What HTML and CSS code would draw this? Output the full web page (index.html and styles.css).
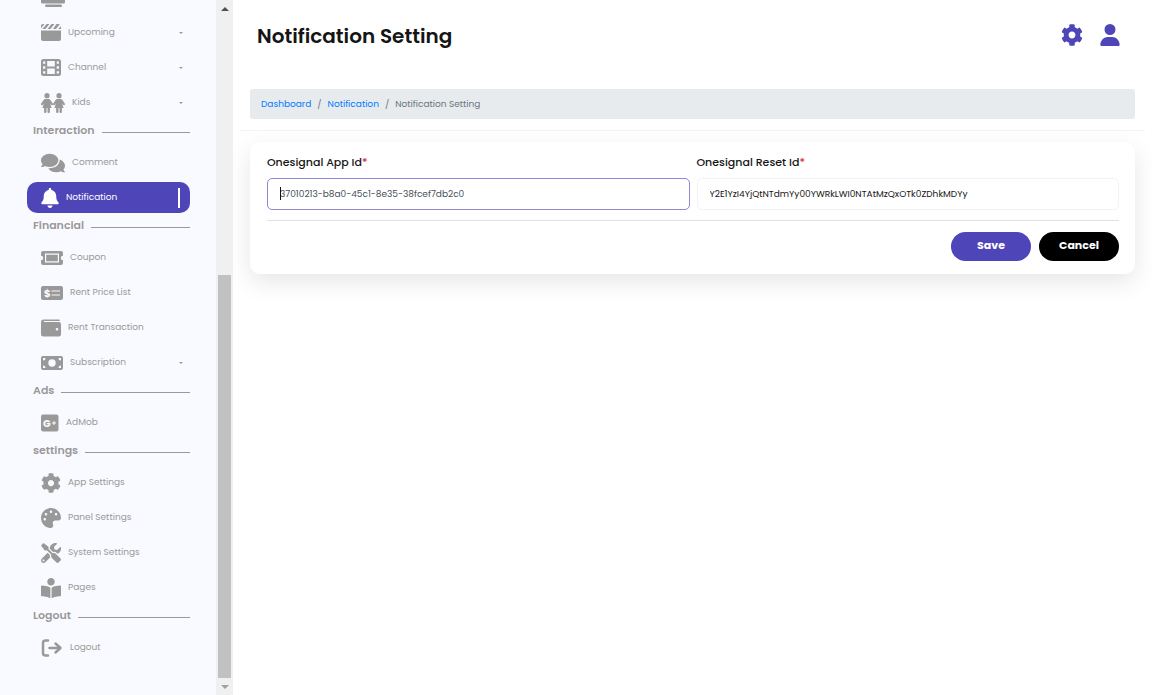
FILE: index.html
```html
<!DOCTYPE html>
<html lang="en">
<head>
  <meta charset="UTF-8" />
  <meta name="viewport" content="width=device-width, initial-scale=1" />
  <title>Notification Setting</title>
  <link rel="stylesheet" href="styles.css">
</head>
<body>
  <svg class="defs" aria-hidden="true">
    <symbol id="cog" viewBox="0 0 512 512"><path d="M487.4 315.7l-42.6-24.6c4.3-23.2 4.3-47 0-70.2l42.6-24.6c4.9-2.8 7.1-8.6 5.5-14-11.1-35.6-30-67.8-54.7-94.6-3.8-4.1-10-5.1-14.8-2.3L380.8 110c-17.9-15.4-38.5-27.3-60.8-35.1V25.8c0-5.6-3.9-10.5-9.4-11.7-36.7-8.2-74.3-7.8-109.2 0-5.5 1.2-9.4 6.1-9.4 11.7V75c-22.2 7.9-42.8 19.8-60.8 35.1L88.7 85.5c-4.9-2.8-11-1.9-14.8 2.3-24.7 26.7-43.6 58.9-54.7 94.6-1.7 5.4.6 11.2 5.5 14L67.3 221c-4.3 23.2-4.3 47 0 70.2l-42.6 24.6c-4.9 2.8-7.1 8.6-5.5 14 11.1 35.6 30 67.8 54.7 94.6 3.8 4.1 10 5.1 14.8 2.3l42.6-24.6c17.9 15.4 38.5 27.3 60.8 35.1v49.2c0 5.6 3.9 10.5 9.4 11.7 36.7 8.2 74.3 7.8 109.2 0 5.5-1.2 9.4-6.1 9.4-11.7v-49.2c22.2-7.9 42.8-19.8 60.8-35.1l42.6 24.6c4.9 2.8 11 1.9 14.8-2.3 24.7-26.7 43.6-58.9 54.7-94.6 1.5-5.5-.7-11.3-5.6-14.1zM256 336c-44.1 0-80-35.9-80-80s35.9-80 80-80 80 35.9 80 80-35.9 80-80 80z"/></symbol>
    <symbol id="kid" viewBox="0 0 12 20"><circle cx="6" cy="2.7" r="2.6"/><path d="M4.400 6h3.200c.8 0 1.400.4 1.800 1l2.400 3.600c.7 1.200-1 2.300-1.800 1.200L9 10.300l1.600 4.700H8.900v3.800c0 1.600-2.400 1.600-2.400 0V15h-1v3.800c0 1.600-2.400 1.600-2.400 0V15H1.400L3 10.300l-1 1.500c-.8 1.100-2.500 0-1.800-1.200L2.600 7c.4-.6 1-1 1.800-1z"/></symbol>
  </svg>

  <div class="wrapper">
    <aside class="sidebar">
      <nav class="menu">
        <a href="#" class="item" aria-label="TV Show">
          <svg width="24" height="20" viewBox="0 0 24 20"><path d="M2 0h20a2 2 0 0 1 2 2v11a2 2 0 0 1-2 2H2a2 2 0 0 1-2-2V2a2 2 0 0 1 2-2zm1 2v10h18V2z"/><rect y="12" width="24" height="3.500" rx="1.500"/><rect x="4" y="16.500" width="17" height="2.500" rx="1.200"/></svg>
          <i class="caret"></i>
        </a>
        <a href="#" class="item">
          <svg width="20" height="20" viewBox="0 0 20 20"><path d="M0 7.500h20V16a2 2 0 0 1-2 2H2a2 2 0 0 1-2-2z"/><path d="M2 1h1.500L0 5.500V3a2 2 0 0 1 2-2zM5.500 1h3L4.500 6h-3zM10.500 1h3l-4 5h-3zM15.500 1H18l.8.200L15 6h-3zM20 3v3h-2.900z"/></svg>
          <span>Upcoming</span><i class="caret"></i>
        </a>
        <a href="#" class="item">
          <svg width="20" height="20" viewBox="0 0 20 20"><path fill-rule="evenodd" d="M2.500 1h15A2.500 2.500 0 0 1 20 3.500v12a2.500 2.500 0 0 1-2.500 2.500h-15A2.500 2.500 0 0 1 0 15.500v-12A2.500 2.500 0 0 1 2.500 1zM2 3.500v2.300h2.300V3.500zm0 4.800v2.400h2.300V8.300zm0 4.900v2.300h2.300v-2.300zM15.700 3.500v2.300H18V3.500zm0 4.800v2.400H18V8.300zm0 4.900v2.300H18v-2.300zM6.200 3v5.500h7.600V3zm0 7.500V16h7.600v-5.500z"/></svg>
          <span>Channel</span><i class="caret"></i>
        </a>
        <a href="#" class="item">
          <svg width="24" height="20" viewBox="0 0 24 20"><use href="#kid" width="12" height="20"/><use href="#kid" x="12" width="12" height="20"/></svg>
          <span>Kids</span><i class="caret"></i>
        </a>

        <h2 class="heading">Interaction</h2>
        <a href="#" class="item">
          <svg width="24" height="22" viewBox="0 0 576 512"><path d="M416 192c0-88.400-93.100-160-208-160S0 103.600 0 192c0 34.300 14.100 65.900 38 92-13.400 30.200-35.500 54.200-35.800 54.500-2.200 2.300-2.800 5.700-1.500 8.700S4.800 352 8 352c36.600 0 66.900-12.300 88.700-25 32.200 15.700 70.300 25 111.300 25 114.900 0 208-71.600 208-160zm122 220c23.900-26 38-57.700 38-92 0-66.900-53.500-124.200-129.300-148.100.9 6.600 1.300 13.300 1.300 20.100 0 105.900-107.700 192-240 192-10.800 0-21.300-.8-31.700-1.900C207.800 439.600 281.800 480 368 480c41 0 79.100-9.200 111.300-25 21.800 12.700 52.100 25 88.700 25 3.200 0 6.100-1.900 7.300-4.800 1.300-2.900.7-6.300-1.500-8.700-.3-.3-22.400-24.200-35.800-54.500z"/></svg>
          <span>Comment</span>
        </a>
        <a href="#" class="item active">
          <svg width="18" height="20" viewBox="0 0 448 512"><path d="M224 512c35.320 0 63.970-28.650 63.970-64H160.030c0 35.350 28.650 64 63.970 64zm215.390-149.710c-19.320-20.760-55.470-51.990-55.470-154.290 0-77.700-54.480-139.900-127.940-155.160V32c0-17.670-14.320-32-31.980-32s-31.980 14.330-31.980 32v20.840C118.560 68.100 64.080 130.300 64.080 208c0 102.300-36.150 133.530-55.470 154.290-6 6.450-8.660 14.160-8.610 21.710.11 16.400 12.980 32 32.100 32h383.800c19.120 0 32-15.600 32.100-32 .05-7.550-2.610-15.270-8.610-21.710z"/></svg>
          <span>Notification</span>
        </a>

        <h2 class="heading">Financial</h2>
        <a href="#" class="item">
          <svg width="22" height="20" viewBox="0 0 22 20"><path fill-rule="evenodd" d="M2 3h18a2 2 0 0 1 2 2v2.800a2.200 2.200 0 0 0 0 4.400V15a2 2 0 0 1-2 2H2a2 2 0 0 1-2-2v-2.800a2.200 2.200 0 0 0 0-4.400V5a2 2 0 0 1 2-2zm2 2.500v9h14v-9zM5.200 6.700h11.600v6.600H5.200z"/></svg>
          <span>Coupon</span>
        </a>
        <a href="#" class="item">
          <svg width="22" height="20" viewBox="0 0 22 20"><rect y="3" width="22" height="14" rx="2"/><path class="cut" d="M10.500 7.500h8.500v1h-8.500zM10.500 11.500h8.500v1h-8.500z"/><text class="glyph" x="3" y="13.500">$</text></svg>
          <span>Rent Price List</span>
        </a>
        <a href="#" class="item">
          <svg width="20" height="20" viewBox="0 0 20 20"><path fill-rule="evenodd" d="M2.500 1.500h15.300a1 1 0 0 1 1 1v.4H3.200a.6.600 0 0 0 0 1.200h14.600A2.200 2.200 0 0 1 20 6.300v10a2.200 2.200 0 0 1-2.200 2.200H2.500A2.500 2.500 0 0 1 0 16V4a2.500 2.500 0 0 1 2.500-2.500zM16 10a1.300 1.300 0 1 0 0 2.600 1.300 1.300 0 0 0 0-2.600z"/></svg>
          <span>Rent Transaction</span>
        </a>
        <a href="#" class="item">
          <svg width="22" height="20" viewBox="0 0 22 20"><rect y="3" width="22" height="14" rx="2"/><g class="cut"><circle cx="11" cy="10" r="3.700"/><path d="M2 7.500V5h2.500A2.500 2.500 0 0 1 2 7.500zM20 7.500V5h-2.500A2.500 2.500 0 0 0 20 7.500zM2 12.500V15h2.500A2.500 2.500 0 0 0 2 12.500zM20 12.500V15h-2.500a2.500 2.500 0 0 1 2.500-2.500z"/></g></svg>
          <span>Subscription</span><i class="caret"></i>
        </a>

        <h2 class="heading">Ads</h2>
        <a href="#" class="item">
          <svg width="18" height="20" viewBox="0 0 18 20"><rect y="1.500" width="17.500" height="17" rx="2"/><text class="glyph" x="2" y="13.500">G</text><path class="cut" d="M11 9.500h1.500V8h1v1.500H15v1h-1.500V12h-1v-1.500H11z"/></svg>
          <span>AdMob</span>
        </a>

        <h2 class="heading">settings</h2>
        <a href="#" class="item">
          <svg width="20" height="20"><use href="#cog" width="20" height="20"/></svg>
          <span>App Settings</span>
        </a>
        <a href="#" class="item">
          <svg width="20" height="20" viewBox="0 0 512 512"><path d="M204.300 5C104.900 24.400 24.800 104.300 5.200 203.400c-37 187 131.700 326.400 258.800 306.700 41.200-6.400 61.400-54.600 42.500-91.700-23.100-45.400 9.900-98.400 60.900-98.400h79.700c35.800 0 64.800-29.600 64.900-65.300C511.500 97.100 368.100-26.900 204.300 5zM96 320c-17.700 0-32-14.300-32-32s14.300-32 32-32 32 14.300 32 32-14.300 32-32 32zm32-128c-17.700 0-32-14.300-32-32s14.300-32 32-32 32 14.300 32 32-14.300 32-32 32zm128-64c-17.700 0-32-14.300-32-32s14.300-32 32-32 32 14.300 32 32-14.300 32-32 32zm128 64c-17.700 0-32-14.300-32-32s14.300-32 32-32 32 14.300 32 32-14.300 32-32 32z"/></svg>
          <span>Panel Settings</span>
        </a>
        <a href="#" class="item">
          <svg width="20" height="20" viewBox="0 0 512 512"><path d="M501.100 395.700L384 278.600c-23.100-23.100-57.600-27.600-85.400-13.900L192 158.100V96L64 0 0 64l96 128h62.100l106.600 106.600c-13.600 27.800-9.200 62.300 13.900 85.400l117.100 117.100c14.600 14.600 38.200 14.600 52.700 0l52.700-52.700c14.500-14.600 14.500-38.200 0-52.700zM331.700 225c28.300 0 54.900 11 74.900 31l19.400 19.400c15.800-6.900 30.800-16.500 43.800-29.500 37.100-37.100 49.700-89.300 37.900-136.700-2.200-9-13.500-12.100-20.100-5.500l-74.400 74.400-67.900-11.300L334 98.900l74.400-74.400c6.600-6.600 3.400-17.900-5.700-20.200-47.400-11.700-99.600.9-136.600 37.900-28.500 28.500-41.900 66.100-41.200 103.600l82.100 82.100c8.100-1.900 16.500-2.900 24.700-2.900zm-103.900 82l-56.700-56.700L18.700 402.800c-25 25-25 65.500 0 90.500s65.500 25 90.500 0l123.600-123.600c-7.600-19.900-9.900-41.600-5-62.700zM64 472c-13.200 0-24-10.800-24-24 0-13.300 10.700-24 24-24s24 10.700 24 24c0 13.200-10.700 24-24 24z"/></svg>
          <span>System Settings</span>
        </a>
        <a href="#" class="item">
          <svg width="20" height="20" viewBox="0 0 512 512"><path d="M352 96c0-53.020-42.980-96-96-96s-96 42.980-96 96 42.980 96 96 96 96-42.980 96-96zM233.590 241.100c-59.330-36.320-155.430-46.300-203.790-49.050C13.550 191.130 0 203.510 0 219.140v222.800c0 14.330 11.590 26.280 26.490 27.050 43.660 2.290 131.990 10.680 193.040 41.430 9.370 4.720 20.480-1.710 20.480-11.870V252.560c-.01-4.670-2.320-8.950-6.420-11.460zm248.610-49.050c-48.350 2.740-144.460 12.730-203.780 49.050-4.100 2.510-6.410 6.960-6.410 11.630v245.790c0 10.190 11.140 16.630 20.540 11.900 61.040-30.720 149.320-39.110 192.970-41.400 14.900-.78 26.490-12.730 26.490-27.060V219.140c-.01-15.630-13.560-28.010-29.810-27.090z"/></svg>
          <span>Pages</span>
        </a>

        <h2 class="heading">Logout</h2>
        <a href="#" class="item">
          <svg width="22" height="20" viewBox="0 0 22 20"><path class="stroke" d="M7 2.500H4.500a2.500 2.500 0 0 0-2.500 2.500v10a2.500 2.500 0 0 0 2.500 2.500H7M8.500 10H19M14.500 5.500L19.500 10l-5 4.500"/></svg>
          <span>Logout</span>
        </a>
      </nav>
    </aside>

    <div class="scrollbar" aria-hidden="true">
      <span class="arrow up"></span>
      <span class="track"></span>
      <span class="thumb"></span>
      <span class="arrow down"></span>
    </div>

    <main class="content">
      <header class="topbar">
        <h1>Notification Setting</h1>
        <div class="actions">
          <a href="#" aria-label="Settings"><svg width="22" height="22"><use href="#cog" width="22" height="22"/></svg></a>
          <a href="#" aria-label="Profile"><svg width="20" height="22" viewBox="0 0 448 512"><path d="M224 256A128 128 0 1 0 224 0a128 128 0 1 0 0 256zm-45.700 48C79.800 304 0 383.800 0 482.300C0 498.700 13.300 512 29.700 512H418.300c16.400 0 29.700-13.300 29.700-29.700C448 383.800 368.200 304 269.700 304H178.300z"/></svg></a>
        </div>
      </header>

      <div class="breadcrumb-row">
        <nav class="breadcrumb" aria-label="breadcrumb">
          <a href="#">Dashboard</a>
          <span>/</span>
          <a href="#">Notification</a>
          <span>/</span>
          <span>Notification Setting</span>
        </nav>
      </div>

      <form class="card">
        <div class="fields">
          <div class="field">
            <label for="app-id">Onesignal App Id<span class="required">*</span></label>
            <div class="input-wrap">
              <input type="text" id="app-id" class="focused" value="37010213-b8a0-45c1-8e35-38fcef7db2c0">
              <span class="cursor"></span>
            </div>
          </div>
          <div class="field">
            <label for="reset-id">Onesignal Reset Id<span class="required">*</span></label>
            <div class="input-wrap">
              <input type="text" id="reset-id" value="Y2E1YzI4YjQtNTdmYy00YWRkLWI0NTAtMzQxOTk0ZDhkMDYy">
            </div>
          </div>
        </div>
        <div class="buttons">
          <button type="button" class="save">Save</button>
          <button type="button" class="cancel">Cancel</button>
        </div>
      </form>
    </main>
  </div>
</body>
</html>
```
FILE: styles.css
```css
* {
  box-sizing: border-box;
}
body {
  margin: 0;
  background-color: #fff;
  color: #151515;
  font-family: Poppins, Inter, sans-serif;
  font-size: 9px;
}
a {
  text-decoration: none;
}
svg {
  display: block;
  flex: none;
  fill: currentColor;
}
.defs {
  position: absolute;
  width: 0;
  height: 0;
}
.wrapper {
  display: flex;
  height: 100vh;
}

/* sidebar */
.sidebar {
  flex: none;
  width: 216px;
  padding: 0 26px 0 27px;
  background-color: #f9faff;
  color: #999;
  overflow: hidden;
}
/* menu is scrolled down to its last entries */
.menu {
  margin-top: -18px;
}
.item {
  display: flex;
  align-items: center;
  gap: 7px;
  height: 31px;
  margin-bottom: 4px;
  padding: 0 7px 0 14px;
  border-radius: 10px;
  color: #999;
}
.item.active {
  background-color: #4e45b8;
  color: #fff;
}
.item.active::after {
  content: "";
  width: 2px;
  height: 20px;
  margin-left: auto;
  margin-right: 3px;
  background-color: #fff;
}
.caret {
  margin-left: auto;
  border-top: 2px solid #999;
  border-left: 2px solid transparent;
  border-right: 2px solid transparent;
}
.heading {
  display: flex;
  align-items: center;
  gap: 7px;
  height: 17px;
  margin: 0 0 8px 6px;
  font-size: 11px;
  font-weight: 600;
}
.heading::after {
  content: "";
  flex: 1;
  height: 1px;
  margin-top: 4px;
  background-color: #999;
}
.cut {
  fill: #f9faff;
}
.glyph {
  fill: #f9faff;
  font-size: 10px;
  font-weight: 700;
}
.stroke {
  fill: none;
  stroke: currentColor;
  stroke-width: 2.5;
  stroke-linecap: round;
  stroke-linejoin: round;
}

/* scrollbar */
.scrollbar {
  display: flex;
  flex-direction: column;
  align-items: center;
  flex: none;
  width: 17px;
  background-color: #f0f0f0;
}
.arrow {
  display: flex;
  align-items: center;
  height: 17px;
}
.arrow::before {
  content: "";
  border: 4px solid transparent;
}
.up::before {
  border-top-width: 0;
  border-bottom-color: #505050;
}
.down::before {
  border-bottom-width: 0;
  border-top-color: #a0a0a0;
}
.track {
  flex: 258;
}
.thumb {
  flex: 403;
  width: 13px;
  background-color: #c1c1c1;
}

/* content */
.content {
  flex: 1;
  min-width: 0;
  overflow: hidden;
}
.topbar {
  display: flex;
  align-items: center;
  justify-content: space-between;
  height: 71px;
  padding: 0 32px 0 24px;
}
h1 {
  margin: 0;
  font-size: 20px;
  font-weight: 600;
}
.actions {
  display: flex;
  gap: 17px;
  padding-bottom: 2px;
}
.actions a {
  color: #4e45b8;
}
.breadcrumb-row {
  margin: 0 7px;
  padding: 18px 10px 11px;
  border-bottom: 1px solid #f3f3f3;
}
.breadcrumb {
  display: flex;
  align-items: center;
  gap: 6px;
  height: 30px;
  padding: 0 11px;
  border-radius: 3px;
  background-color: #e7ebee;
  color: #6c757d;
}
.breadcrumb a {
  color: #007bff;
}
.card {
  margin: 11px 17px;
  padding: 12px 16px 13px 17px;
  border-radius: 10px;
  background-color: #fff;
  box-shadow: 0 8px 24px rgba(0, 0, 0, 0.1);
}
.fields {
  display: flex;
  gap: 7px;
  padding-bottom: 10px;
  border-bottom: 1px solid #dee2e6;
}
.field {
  flex: 1;
}
label {
  display: block;
  margin-bottom: 8px;
  font-size: 11px;
  font-weight: 500;
  line-height: 16px;
}
.required {
  color: #dc3545;
}
.input-wrap {
  position: relative;
}
input {
  display: block;
  width: 100%;
  height: 32px;
  padding: 0 12px;
  border: 1px solid #f3f3f3;
  border-radius: 5px;
  background-color: #fff;
  color: #151515;
  font: inherit;
  outline: none;
}
input.focused {
  border-color: #8f88d2;
  color: #495057;
}
.cursor {
  position: absolute;
  top: 9px;
  left: 13px;
  width: 1px;
  height: 13px;
  background-color: #151515;
}
.buttons {
  display: flex;
  justify-content: flex-end;
  gap: 8px;
  padding-top: 11px;
}
button {
  width: 80px;
  height: 29px;
  padding: 0 0 2px;
  border: none;
  border-radius: 15px;
  color: #fff;
  font: inherit;
  font-size: 11px;
  font-weight: 700;
  cursor: pointer;
}
.save {
  background-color: #4e45b8;
}
.cancel {
  background-color: #000;
}
```
